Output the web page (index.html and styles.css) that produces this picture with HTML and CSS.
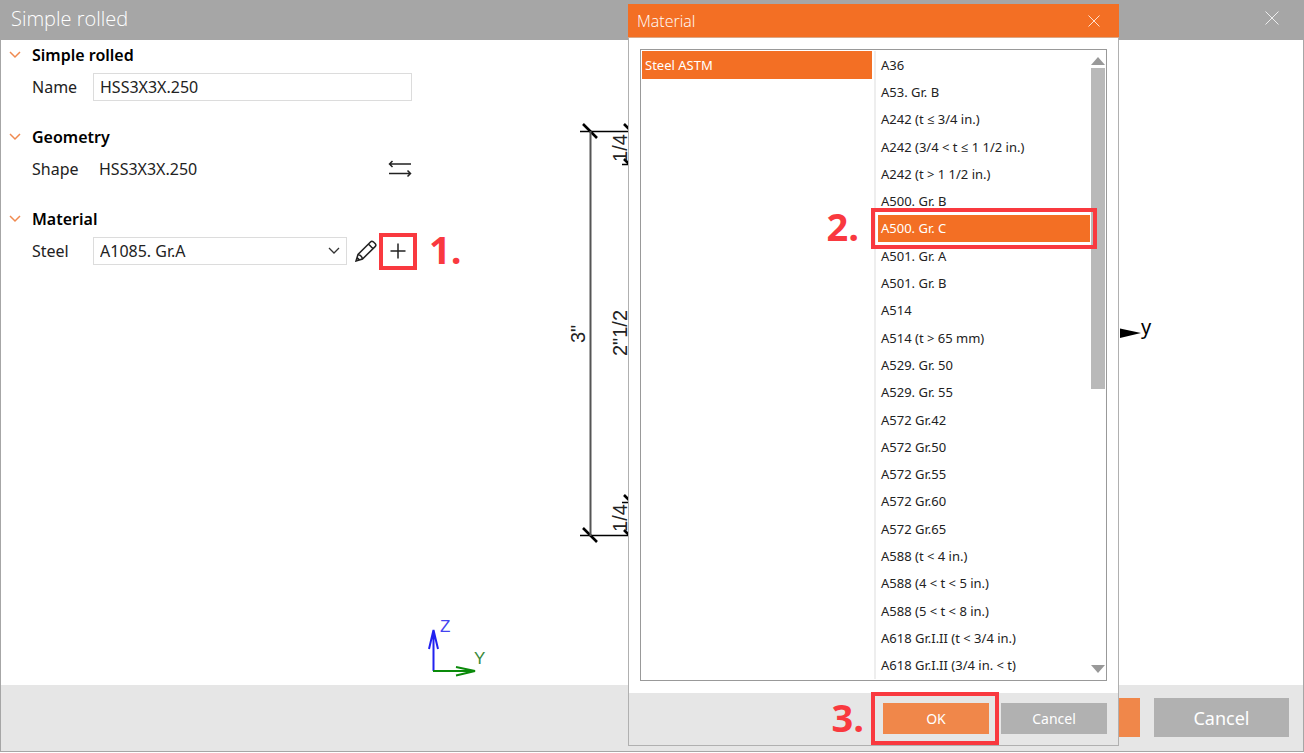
FILE: index.html
```html
<!DOCTYPE html>
<html lang="en">
<head>
    <meta charset="UTF-8">
    <meta name="viewport" content="width=device-width, initial-scale=1.0">
    <title>Simple rolled</title>
    <link rel="stylesheet" href="styles.css">
</head>
<body>
    <div class="window">
        <header class="titlebar">
            <h1>Simple rolled</h1>
            <button type="button" class="close-btn" aria-label="Close">
                <svg width="14" height="14" viewBox="0 0 14 14"><path d="M0.5 0.5l13 13M13.5 0.5l-13 13"/></svg>
            </button>
        </header>

        <main>
            <form class="properties">
                <section>
                    <h2>
                        <svg class="chevron" width="12" height="8" viewBox="0 0 12 8"><path d="M1 1l5 5 5-5"/></svg>
                        Simple rolled
                    </h2>
                    <div class="row">
                        <label for="name">Name</label>
                        <input type="text" id="name" value="HSS3X3X.250">
                    </div>
                </section>
                <section>
                    <h2>
                        <svg class="chevron" width="12" height="8" viewBox="0 0 12 8"><path d="M1 1l5 5 5-5"/></svg>
                        Geometry
                    </h2>
                    <div class="row">
                        <span class="label">Shape</span>
                        <span class="value">HSS3X3X.250</span>
                        <button type="button" class="icon-btn swap-btn" aria-label="Change shape">
                            <svg width="24" height="18" viewBox="0 0 24 18"><path d="M23 4H1.500M4.500 1L1.500 4l3 3M1 13.500h21.500M19.500 10.500l3 3-3 3"/></svg>
                        </button>
                    </div>
                </section>
                <section>
                    <h2>
                        <svg class="chevron" width="12" height="8" viewBox="0 0 12 8"><path d="M1 1l5 5 5-5"/></svg>
                        Material
                    </h2>
                    <div class="row">
                        <label for="steel">Steel</label>
                        <div class="select">
                            <select id="steel">
                                <option>A1085. Gr.A</option>
                            </select>
                            <svg width="12" height="8" viewBox="0 0 12 8"><path d="M1 1l5 5 5-5"/></svg>
                        </div>
                        <button type="button" class="icon-btn" aria-label="Edit">
                            <svg width="22" height="22" viewBox="0 0 22 22"><path d="M1 21l2-6.500L15.500 2q1.200-1.200 2.800-.2l2 2q1.200 1.500-.2 2.800L7.500 19zM3 14.500q3.500.5 4.500 4.500M13.500 4l4.500 4.700M1 21l3.500-1-2.400-2.400z"/></svg>
                        </button>
                        <button type="button" class="icon-btn add-btn" aria-label="Add">
                            <svg width="16" height="16" viewBox="0 0 16 16"><path d="M8 0.500v15M0.500 8h15"/></svg>
                            <span class="step step-add">1.</span>
                        </button>
                    </div>
                </section>
            </form>

            <svg class="drawing" viewBox="420 40 882 645" preserveAspectRatio="xMinYMin meet">
                <!-- dimension lines -->
                <path class="dim" d="M580 131.500H700M580 535.500H700M622 164.500h10M622 502.500h10"/>
                <path class="dim-tick" d="M583 124l14 14M583 528l14 14M624 124l8 8M624 159l8 8M624 495l8 8M624 530l8 8"/>
                <path class="dim-main" d="M590.500 131v405"/>
                <g class="dim-text">
                    <text transform="translate(585 334) rotate(-90)">3"</text>
                    <text transform="translate(627 148) rotate(-90)">1/4</text>
                    <text transform="translate(627 333) rotate(-90)">2"1/2</text>
                    <text transform="translate(627 518) rotate(-90)">1/4</text>
                </g>
                <!-- section axis -->
                <path d="M1120 328.500L1141 333l-21 5z"/>
                <text class="axis-text" x="1141" y="334">y</text>
                <!-- coordinate system -->
                <path class="axis-z" d="M433.500 671V630M429 649l4.500-19 4.500 19"/>
                <path class="axis-y" d="M433 671h42M456 667l19 4-19 4.500"/>
                <text class="label-z" x="440" y="632">Z</text>
                <text class="label-y" x="474" y="664">Y</text>
            </svg>
        </main>

        <footer class="actions">
            <button type="button" class="btn btn-primary" aria-label="OK"></button>
            <button type="button" class="btn">Cancel</button>
        </footer>
    </div>

    <div class="dialog" role="dialog" aria-labelledby="dialog-title">
        <header class="dialog-title">
            <h2 id="dialog-title">Material</h2>
            <button type="button" class="close-btn" aria-label="Close">
                <svg width="12" height="12" viewBox="0 0 12 12"><path d="M0.5 0.5l11 11M11.5 0.5l-11 11"/></svg>
            </button>
        </header>
        <div class="lists">
            <ul class="groups">
                <li><button type="button" class="selected">Steel ASTM</button></li>
            </ul>
            <ul class="materials">
                <li><button type="button">A36</button></li>
                <li><button type="button">A53. Gr. B</button></li>
                <li><button type="button">A242 (t ≤ 3/4 in.)</button></li>
                <li><button type="button">A242 (3/4 &lt; t ≤ 1 1/2 in.)</button></li>
                <li><button type="button">A242 (t &gt; 1 1/2 in.)</button></li>
                <li><button type="button">A500. Gr. B</button></li>
                <li class="marked">
                    <button type="button" class="selected">A500. Gr. C</button>
                    <span class="step step-pick">2.</span>
                </li>
                <li><button type="button">A501. Gr. A</button></li>
                <li><button type="button">A501. Gr. B</button></li>
                <li><button type="button">A514</button></li>
                <li><button type="button">A514 (t &gt; 65 mm)</button></li>
                <li><button type="button">A529. Gr. 50</button></li>
                <li><button type="button">A529. Gr. 55</button></li>
                <li><button type="button">A572 Gr.42</button></li>
                <li><button type="button">A572 Gr.50</button></li>
                <li><button type="button">A572 Gr.55</button></li>
                <li><button type="button">A572 Gr.60</button></li>
                <li><button type="button">A572 Gr.65</button></li>
                <li><button type="button">A588 (t &lt; 4 in.)</button></li>
                <li><button type="button">A588 (4 &lt; t &lt; 5 in.)</button></li>
                <li><button type="button">A588 (5 &lt; t &lt; 8 in.)</button></li>
                <li><button type="button">A618 Gr.I.II (t &lt; 3/4 in.)</button></li>
                <li><button type="button">A618 Gr.I.II (3/4 in. &lt; t)</button></li>
            </ul>
            <div class="scrollbar">
                <svg width="14" height="8" viewBox="0 0 14 8"><path d="M7 0l7 8H0z"/></svg>
                <div class="track"><div class="thumb"></div></div>
                <svg width="14" height="8" viewBox="0 0 14 8"><path d="M0 0h14L7 8z"/></svg>
            </div>
        </div>
        <footer class="dialog-actions">
            <div class="marked">
                <button type="button" class="btn btn-primary">OK</button>
                <span class="step step-ok">3.</span>
            </div>
            <button type="button" class="btn">Cancel</button>
        </footer>
    </div>
</body>
</html>
```
FILE: styles.css
```css
* {
    box-sizing: border-box;
}
body {
    margin: 0;
    height: 100vh;
    padding-bottom: 1px;
    position: relative;
    overflow: hidden;
    background-color: #fff;
    color: #222;
    font-family: "Noto Sans", "Open Sans", sans-serif;
    font-size: 16px;
}
h1, h2, ul {
    margin: 0;
    padding: 0;
    list-style: none;
}
button, input, select {
    font-family: inherit;
    font-size: inherit;
    color: inherit;
    border: none;
    border-radius: 0;
    margin: 0;
    padding: 0;
    background: none;
}
svg {
    display: block;
    flex-shrink: 0;
}
.window {
    height: 100%;
    display: flex;
    flex-direction: column;
    border: 1px solid #a6a6a6;
    border-top: none;
}
.titlebar {
    height: 40px;
    padding: 0 24px 4px 10px;
    display: flex;
    justify-content: space-between;
    align-items: center;
    background-color: #a6a6a6;
    color: #fff;
}
.titlebar h1 {
    font-family: "Open Sans", sans-serif;
    font-size: 20px;
    font-weight: 300;
}
.close-btn svg {
    fill: none;
    stroke: #fff;
    stroke-width: 0.8;
}
main {
    flex: 1;
    min-height: 0;
    display: flex;
}

/* Property panel */
.properties {
    width: 419px;
    flex-shrink: 0;
}
.properties section {
    padding-bottom: 18px;
}
.properties h2 {
    height: 30px;
    padding-left: 8px;
    display: flex;
    align-items: center;
    gap: 11px;
    font-size: 16px;
    font-weight: 600;
    color: #000;
}
.chevron {
    fill: none;
    stroke: #f08a50;
    stroke-width: 1.5;
}
.row {
    height: 34px;
    padding: 0 8px 0 31px;
    display: flex;
    align-items: center;
}
.row label, .row .label {
    width: 61px;
}
.row input, .row select {
    height: 28px;
    border: 1px solid #dcdcdc;
    padding: 0 6px;
    width: 100%;
    background-color: #fff;
}
.row input {
    flex: 1;
    min-width: 0;
}
.row .value {
    flex: 1;
    padding-left: 6px;
}
.select {
    width: 254px;
    display: grid;
    align-items: center;
}
.select select, .select svg {
    grid-area: 1 / 1;
}
.select select {
    appearance: none;
}
.select svg {
    justify-self: end;
    margin-right: 7px;
    fill: none;
    stroke: #333;
    stroke-width: 1.3;
    pointer-events: none;
}
.icon-btn {
    display: flex;
    align-items: center;
    justify-content: center;
    height: 37px;
    padding-left: 8px;
}
.icon-btn svg {
    fill: none;
    stroke: #222;
    stroke-width: 1.5;
}
.icon-btn.add-btn {
    width: 38px;
    flex-shrink: 0;
    margin: 0 -6px 0 2px;
    padding: 0;
    border: 4px solid #f9393f;
    position: relative;
}

/* Drawing */
.drawing {
    flex: 1;
    min-width: 0;
    height: 100%;
    font-family: "Liberation Sans", sans-serif;
}
.dim {
    stroke: #000;
    stroke-width: 1.6;
}
.dim-tick {
    stroke: #000;
    stroke-width: 2.6;
}
.dim-main {
    stroke: #555;
    stroke-width: 2;
}
.dim-text {
    font-size: 20px;
    text-anchor: middle;
    fill: #222;
}
.axis-text {
    font-family: "Noto Sans", sans-serif;
    font-size: 20px;
}
.axis-z, .axis-y {
    fill: none;
    stroke-width: 2;
}
.axis-z {
    stroke: #2222f0;
}
.axis-y {
    stroke: #0a8a0a;
}
.label-z, .label-y {
    font-size: 17px;
}
.label-z {
    fill: #4444f0;
}
.label-y {
    fill: #3a8a3a;
}

/* Buttons */
.btn {
    background-color: #b1b1b1;
    color: #fff;
}
.btn-primary {
    background-color: #f0874a;
}
.actions {
    height: 66px;
    padding: 13px 14px;
    display: flex;
    justify-content: flex-end;
    align-items: flex-start;
    gap: 14px;
    background-color: #e6e6e6;
}
.actions .btn {
    width: 135px;
    height: 39px;
    font-size: 18px;
}

/* Material dialog */
.dialog {
    position: absolute;
    top: 4px;
    right: 185px;
    bottom: 7px;
    width: 491px;
    display: flex;
    flex-direction: column;
    background-color: #fff;
    border: 1px solid #b0b0b0;
    border-top: none;
    font-size: 13px;
}
.dialog-title {
    height: 34px;
    margin: 0 -1px;
    padding: 0 19px 0 9px;
    display: flex;
    justify-content: space-between;
    align-items: center;
    background-color: #f36f24;
    border-bottom: 1px solid #d9a888;
    color: #fff;
}
.dialog-title h2 {
    font-family: "Open Sans", sans-serif;
    font-size: 16px;
    font-weight: 300;
}
.lists {
    flex: 1;
    min-height: 0;
    margin: 11px 11px 12px;
    padding: 1px;
    display: flex;
    border: 1px solid #999;
}
.lists button {
    width: 100%;
    height: 100%;
    padding: 0 3px;
    text-align: left;
}
.lists .selected {
    background-color: #f36f24;
    color: #fff;
}
.groups {
    width: 234px;
    padding-right: 2px;
    border-right: 2px solid #eee;
}
.groups li {
    height: 28px;
}
.materials {
    flex: 1;
    padding: 0 1px 0 2px;
    display: flex;
    flex-direction: column;
}
.materials li {
    flex: 1;
    min-height: 0;
}
.scrollbar {
    width: 14px;
    padding: 6px 0;
    display: flex;
    flex-direction: column;
    gap: 3px;
}
.scrollbar svg {
    fill: #999;
}
.track {
    flex: 1;
}
.thumb {
    height: 54%;
    background-color: #b9b9b9;
}
.dialog-actions {
    height: 52px;
    padding: 10px 11px;
    display: flex;
    justify-content: flex-end;
    align-items: flex-start;
    gap: 12px;
    background-color: #e6e6e6;
}
.dialog-actions .btn {
    width: 106px;
    height: 31px;
    font-size: 14px;
}

/* Step markers */
.marked {
    position: relative;
}
.marked::after {
    content: "";
    position: absolute;
    inset: -7px;
    border: 4px solid #f9393f;
    pointer-events: none;
}
.dialog-actions .marked::after {
    inset: -11px -10px -11px -12px;
}
.step {
    position: absolute;
    top: 50%;
    transform: translateY(-50%);
    padding-bottom: 4px;
    color: #f9393f;
    font-family: "Open Sans", sans-serif;
    font-size: 38px;
    font-weight: 700;
    line-height: 40px;
}
.step-add {
    left: 46px;
}
.step-pick, .step-ok {
    right: 100%;
    margin-right: 19px;
}
```
